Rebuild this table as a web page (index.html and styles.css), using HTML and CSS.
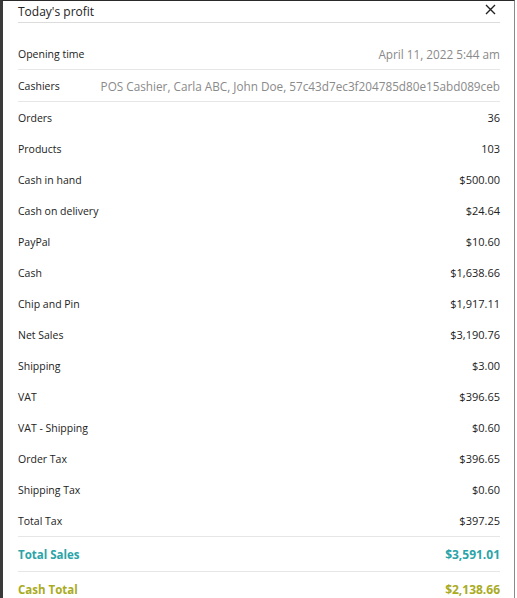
FILE: index.html
```html
<!DOCTYPE html>
<html lang="en">
<head>
    <meta charset="UTF-8">
    <meta name="viewport" content="width=device-width, initial-scale=1.0">
    <title>Today's profit</title>
    <link rel="stylesheet" href="styles.css">
</head>
<body>

    <div class="modal">
        <div class="modal-header">
            <span class="modal-title">Today's profit</span>
            <button type="button" class="close-btn" aria-label="Close">
                <svg width="11" height="11" viewBox="0 0 11 11">
                    <path d="M1 1 L10 10 M10 1 L1 10" stroke="#222" stroke-width="1.4" fill="none"/>
                </svg>
            </button>
        </div>

        <div class="modal-body">
            <div class="row divided">
                <span class="label">Opening time</span>
                <span class="value muted">April 11, 2022 5:44 am</span>
            </div>
            <div class="row divided">
                <span class="label">Cashiers</span>
                <span class="value muted">POS Cashier, Carla ABC, John Doe, 57c43d7ec3f204785d80e15abd089ceb</span>
            </div>
            <div class="row"><span class="label">Orders</span><span class="value">36</span></div>
            <div class="row"><span class="label">Products</span><span class="value">103</span></div>
            <div class="row"><span class="label">Cash in hand</span><span class="value">$500.00</span></div>
            <div class="row"><span class="label">Cash on delivery</span><span class="value">$24.64</span></div>
            <div class="row"><span class="label">PayPal</span><span class="value">$10.60</span></div>
            <div class="row"><span class="label">Cash</span><span class="value">$1,638.66</span></div>
            <div class="row"><span class="label">Chip and Pin</span><span class="value">$1,917.11</span></div>
            <div class="row"><span class="label">Net Sales</span><span class="value">$3,190.76</span></div>
            <div class="row"><span class="label">Shipping</span><span class="value">$3.00</span></div>
            <div class="row"><span class="label">VAT</span><span class="value">$396.65</span></div>
            <div class="row"><span class="label">VAT - Shipping</span><span class="value">$0.60</span></div>
            <div class="row"><span class="label">Order Tax</span><span class="value">$396.65</span></div>
            <div class="row"><span class="label">Shipping Tax</span><span class="value">$0.60</span></div>
            <div class="row divided"><span class="label">Total Tax</span><span class="value">$397.25</span></div>

            <div class="row total divided total-sales">
                <span class="label">Total Sales</span>
                <span class="value">$3,591.01</span>
            </div>
            <div class="row total cash-total">
                <span class="label">Cash Total</span>
                <span class="value">$2,138.66</span>
            </div>
        </div>
    </div>

</body>
</html>
```

FILE: styles.css
```css
body {
    margin: 0;
    background: #fff;
    font-family: "Open Sans", "Noto Sans", sans-serif;
    color: #222;
    overflow: hidden;
}

.modal {
    width: 515px;
    height: 598px;
    box-sizing: border-box;
    border-top: 1px solid #2a2a2a;
    border-left: 3px solid #3a3a3a;
    border-right: 1px solid #8a8a8a;
    padding: 0 14px 0 15px;
}

.modal-header {
    display: flex;
    justify-content: space-between;
    align-items: center;
    height: 21px;
    border-bottom: 1px solid #dcdcdc;
}

.modal-title {
    font-size: 12px;
    color: #222;
    margin-top: -1px;
}

.close-btn {
    border: none;
    background: none;
    padding: 0;
    margin-right: 4px;
    margin-top: -4px;
    display: flex;
    cursor: pointer;
}

.modal-body {
    padding-top: 15px;
}

.row {
    display: flex;
    justify-content: space-between;
    align-items: center;
    height: 31px;
}

.row.divided {
    height: 32px;
    box-sizing: border-box;
    border-bottom: 1px solid #e6e6e6;
}

.label {
    font-size: 10.5px;
    white-space: nowrap;
}

.value {
    font-size: 11px;
    white-space: nowrap;
}

.value.muted {
    font-size: 11.75px;
    color: #8a8a8a;
}

.row.total {
    height: 35px;
    font-weight: 700;
}

.row.total .label {
    font-size: 11.5px;
}

.row.total .value {
    font-size: 12px;
}

.total-sales {
    color: #2aa4a8;
}

.cash-total {
    color: #a9ab23;
}
```
